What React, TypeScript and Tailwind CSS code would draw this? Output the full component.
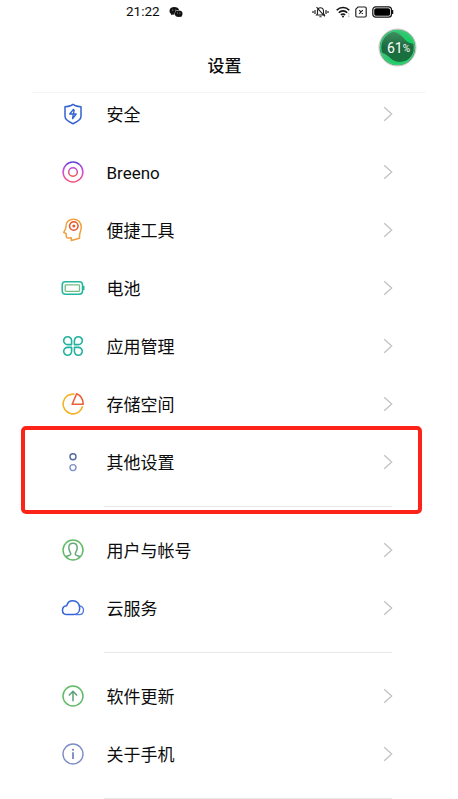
import React from 'react';

const icons: Record<string, React.ReactNode> = {
  security: (
    <g stroke="#3563cf" strokeWidth="1.5">
      <path d="M12 2.3 L14 3.5 Q16.500 4.700 20 4.800 V14.500 C20 17.500 17 19.500 12 21.700 C7 19.500 4 17.500 4 14.500 V4.800 Q7.500 4.700 10 3.500 Z" />
      <path d="M12.800 7 L8.700 12 H15.200 L11.400 17.200 M13.300 7.500 L11.500 16.500" strokeWidth="1.3" />
    </g>
  ),
  breeno: (
    <g strokeWidth="1.5">
      <defs>
        <linearGradient id="outer" x1="0" y1="0" x2="0" y2="1">
          <stop offset="0" stopColor="#6040d8" />
          <stop offset="0.4" stopColor="#d04be0" />
          <stop offset="1" stopColor="#f55078" />
        </linearGradient>
        <linearGradient id="inner" x1="0" y1="0" x2="0" y2="1">
          <stop offset="0" stopColor="#b94be0" />
          <stop offset="1" stopColor="#f05050" />
        </linearGradient>
      </defs>
      <circle cx="12" cy="12" r="9.900" stroke="url(#outer)" />
      <circle cx="12" cy="12" r="4.300" stroke="url(#inner)" />
    </g>
  ),
  tools: (
    <g strokeWidth="1.500">
      <path
        d="M10.300 22.500 V19.800 C8.500 20.200 5.500 20.400 5.300 18.800 L5.100 15.500 L2.700 14.300 C4.200 12 5 10.500 5 8.500 C5 4 8.200 1.200 12.500 1.200 C17.200 1.200 20.300 4.500 20.300 9 C20.300 13 18.500 14.500 18.500 18 V20.300 Z"
        stroke="#f0a03c"
      />
      <circle cx="12.800" cy="8" r="4.200" stroke="#e4572e" />
      <circle cx="12.800" cy="8" r="1.500" fill="#e4572e" stroke="none" />
    </g>
  ),
  battery: (
    <g strokeWidth="1.500">
      <rect x="1.200" y="5.800" width="20.300" height="12.500" rx="3.200" stroke="#1fb89c" />
      <rect x="4.200" y="8.800" width="14.300" height="6.500" rx="0.800" stroke="#78bd83" strokeWidth="1.300" />
      <path d="M22.700 9.800 V14.200" stroke="#1fb89c" strokeWidth="1.500" />
    </g>
  ),
  apps: (
    <g stroke="#21b39d" strokeWidth="1.600">
      <path d="M10.600 10.600 H6.700 A3.950 3.950 0 1 1 10.600 6.700 Z" />
      <path d="M13.400 10.600 H17.300 A3.950 3.950 0 1 0 13.400 6.700 Z" />
      <path d="M10.600 13.400 H6.700 A3.950 3.950 0 1 0 10.600 17.300 Z" />
      <path d="M13.400 13.400 H17.300 A3.950 3.950 0 1 1 13.400 17.300 Z" />
    </g>
  ),
  storage: (
    <g strokeWidth="1.600">
      <path d="M13.400 2.200 A9.900 9.900 0 1 0 21.600 14.300" stroke="#f3b229" />
      <path d="M15.600 1.800 L11.200 12.200 H22.200 C22.200 7.200 19.500 3.500 15.600 1.800 Z" stroke="#ea6037" />
    </g>
  ),
  other: (
    <g strokeWidth="1.400">
      <circle cx="12" cy="6.800" r="3" stroke="#5067a2" />
      <circle cx="12" cy="17.600" r="3" stroke="#7d92c8" />
    </g>
  ),
  account: (
    <g strokeWidth="1.500">
      <circle cx="12" cy="12" r="10" stroke="#62bb66" />
      <path
        d="M4.800 18.800 C6.500 17.500 9.800 17.800 9.800 16 C9.800 14.500 7.800 13 7.800 9.800 C7.800 7 9.500 5.300 12 5.300 C14.500 5.300 16.200 7 16.200 9.800 C16.200 13 14.200 14.500 14.200 16 C14.200 17.800 17.500 17.500 19.200 18.800"
        stroke="#69aa7c"
      />
    </g>
  ),
  cloud: (
    <g stroke="#3363d6" strokeWidth="1.500">
      <path d="M6 18.600 C3.300 18.600 1.500 16.800 1.500 14.200 C1.500 11.500 3.500 9.800 5.800 9.700 C6.500 6.700 8.800 4.800 11.800 4.800 C15.800 4.800 18.700 7.800 18.700 12 C18.700 16 16 18.600 12.500 18.600 Z" />
      <path d="M18.600 9.800 C21 10.200 22.500 11.900 22.500 14.200 C22.500 16.800 20.700 18.600 18 18.600 H14" stroke="#4b7be4" strokeWidth="1.300" />
    </g>
  ),
  update: (
    <g strokeWidth="1.500">
      <circle cx="12" cy="12" r="10" stroke="#62bb66" />
      <path d="M12 17.200 V7.500 M7.900 11.500 L12 7.300 L16.100 11.500" stroke="#5ba177" />
    </g>
  ),
  about: (
    <g strokeWidth="1.400">
      <circle cx="12" cy="12" r="10" stroke="#7e8dc4" />
      <path d="M12 10.300 V17" stroke="#6576b4" strokeWidth="1.600" />
      <circle cx="12" cy="7.700" r="1" fill="#6576b4" stroke="none" />
    </g>
  ),
};

const groups = [
  [
    { icon: 'security', label: '安全' },
    { icon: 'breeno', label: 'Breeno' },
    { icon: 'tools', label: '便捷工具' },
    { icon: 'battery', label: '电池' },
    { icon: 'apps', label: '应用管理' },
    { icon: 'storage', label: '存储空间' },
    { icon: 'other', label: '其他设置' },
  ],
  [
    { icon: 'account', label: '用户与帐号' },
    { icon: 'cloud', label: '云服务' },
  ],
  [
    { icon: 'update', label: '软件更新' },
    { icon: 'about', label: '关于手机' },
  ],
];

function Row({ icon, label }: { icon: string; label: string }) {
  return (
    <div className="flex h-[58px] items-center pl-[61px] pr-[65px]">
      <svg viewBox="0 0 24 24" fill="none" strokeLinejoin="round" className="-mt-px size-6 shrink-0">
        {icons[icon]}
      </svg>
      <span className="ml-[21.5px] flex-1 text-[17px] leading-6">{label}</span>
      <svg viewBox="0 0 10 16" fill="none" className="-mt-px h-4 w-2.5">
        <path d="M1.200 1.200 L8.700 8 L1.200 14.800" stroke="#c2c2c2" strokeWidth="1.300" />
      </svg>
    </div>
  );
}

function StatusBar() {
  return (
    <div className="flex h-6 items-center pl-[126px] pr-[64px]">
      <span className="-mt-0.5 text-[13.5px] leading-[22px]">21:22</span>
      {/* WeChat */}
      <svg viewBox="0 0 14 12" className="ml-[9px] h-3 w-3.5">
        <path d="M5.300 1 C2.500 1 .5 2.700 .5 4.900 C.5 6.200 1.200 7.200 2.300 7.900 L2 9.300 L3.800 8.500 L5.600 8.700 C5.200 6 7.200 4 10.100 4 C9.700 2.200 7.700 1 5.300 1 Z" fill="#111" />
        <ellipse cx="9.700" cy="7.700" rx="3.800" ry="3.200" fill="#111" />
        <path d="M11 10 L12.300 11.300 L12.400 9 Z" fill="#111" />
        <g fill="#fff">
          <circle cx="3.800" cy="3.900" r=".5" />
          <circle cx="6.800" cy="3.900" r=".5" />
          <circle cx="8.500" cy="7" r=".45" />
          <circle cx="10.900" cy="7" r=".45" />
        </g>
      </svg>
      <div className="ml-auto flex items-center">
        {/* Muted bell with vibration marks */}
        <svg viewBox="0 0 17 12" fill="none" stroke="#222" className="h-3 w-[17px]">
          <path d="M4.500 9 H12.500 L11.500 7.500 V5 C11.500 3 10.200 1.800 8.500 1.800 C6.800 1.800 5.500 3 5.500 5 V7.500 Z M7.400 10.700 H9.600 M4.500 1.200 L12.800 10.300" strokeWidth="1.100" />
          <path d="M3 4 V8 M14 4 V8 M1 5 V7 M16 5 V7" strokeWidth="1.200" />
        </svg>
        <svg viewBox="0 0 15 12" fill="none" stroke="#111" strokeWidth="1.600" className="ml-[7px] h-3 w-[15px]">
          <path d="M.7 4.200 C4.200 .6 9.800 .6 13.300 4.200 M2.800 6.700 C5.200 4.200 8.800 4.200 11.200 6.700 M4.900 9 C6.200 7.700 7.800 7.700 9.100 9" />
          <circle cx="7" cy="10.500" r="1" fill="#111" stroke="none" />
          <path d="M12.800 7 V8.500 M12.800 9.500 V11" stroke="#aaa" strokeWidth="1" />
        </svg>
        <svg viewBox="0 0 12 12" fill="none" stroke="#222" strokeWidth="1.200" className="ml-1 size-3">
          <path d="M3 1 H10 Q11.200 1 11.200 2.200 V9.800 Q11.200 11 10 11 H2 Q.8 11 .8 9.800 V3.200 Z M4.200 4.200 L7.800 7.800 M7.800 4.200 L4.200 7.800" />
        </svg>
        <svg viewBox="0 0 22 12" className="ml-[5px] h-3 w-[22px]">
          <rect x=".8" y=".8" width="18.700" height="10.400" rx="3" fill="none" stroke="#111" strokeWidth="1.200" />
          <rect x="2.200" y="2.200" width="15.900" height="7.600" rx="1.900" fill="#000" />
          <path d="M20.600 4 V8" stroke="#111" strokeWidth="1.300" />
        </svg>
      </div>
    </div>
  );
}

function FloatingBall() {
  return (
    <div className="absolute left-[377px] top-[27px] size-10">
      <svg viewBox="0 0 40 40" className="size-10">
        <defs>
          <linearGradient id="ball" x1="0" y1="0" x2="0" y2="1">
            <stop offset="0" stopColor="#4a9a6b" />
            <stop offset="0.5" stopColor="#1c6b40" />
            <stop offset="1" stopColor="#16743c" />
          </linearGradient>
          <linearGradient id="wave" x1="0" y1="0" x2="0" y2="1">
            <stop offset="0" stopColor="#46bd7c" />
            <stop offset="1" stopColor="#0cd45d" />
          </linearGradient>
          <clipPath id="disc">
            <circle cx="20.500" cy="20.500" r="17.600" />
          </clipPath>
        </defs>
        <circle cx="20.500" cy="20.500" r="18.600" fill="#a3aaa5" stroke="#d2d5d2" strokeWidth="1" />
        <g clipPath="url(#disc)">
          <rect width="40" height="40" fill="url(#ball)" />
          <path d="M10 4 C20 4 24 8 27.500 12 C30.500 15.500 33.500 16.500 38 17 V0 H10 Z" fill="url(#wave)" />
          <path d="M2 25.500 C9 26 11 29 15 32.500 C20 36.500 29 35.500 34 30 L38 26 V40 H2 Z" fill="url(#wave)" />
          <circle cx="20.500" cy="20.500" r="16.900" fill="none" stroke="#39cf78" strokeWidth="1.400" />
        </g>
      </svg>
      <div className="absolute inset-0 flex items-center justify-center pl-[3px] pt-px text-white">
        <span className="text-[14px] leading-none">61</span>
        <span className="pt-[3px] text-[10px] leading-none">%</span>
      </div>
    </div>
  );
}

export default function App() {
  return (
    <div className="relative h-[799px] w-[458px] overflow-hidden bg-white font-[Roboto,'Noto_Sans_CJK_SC',sans-serif] text-[#0c0c0c]">
      <StatusBar />

      {/* Page title */}
      <div className="mx-8 flex h-[69px] items-center justify-center border-b border-[#f5f5f5] pr-[9px] pt-4">
        <h1 className="text-[17px] font-medium leading-6">设置</h1>
      </div>

      {/* Settings list */}
      <div className="-mt-[7.5px]">
        {groups.map((group, i) => (
          <div key={i}>
            {group.map((item) => (
              <Row key={item.icon} {...item} />
            ))}
            <div className="mb-[15px] ml-[104px] mr-[66px] mt-[14px] h-px bg-[#e8e8e8]" />
          </div>
        ))}
      </div>

      {/* Highlight frame */}
      <div className="absolute left-[21px] top-[426px] h-[88px] w-[401px] rounded-[5px] border-4 border-[#fc2318]" />

      <FloatingBall />
    </div>
  );
}
